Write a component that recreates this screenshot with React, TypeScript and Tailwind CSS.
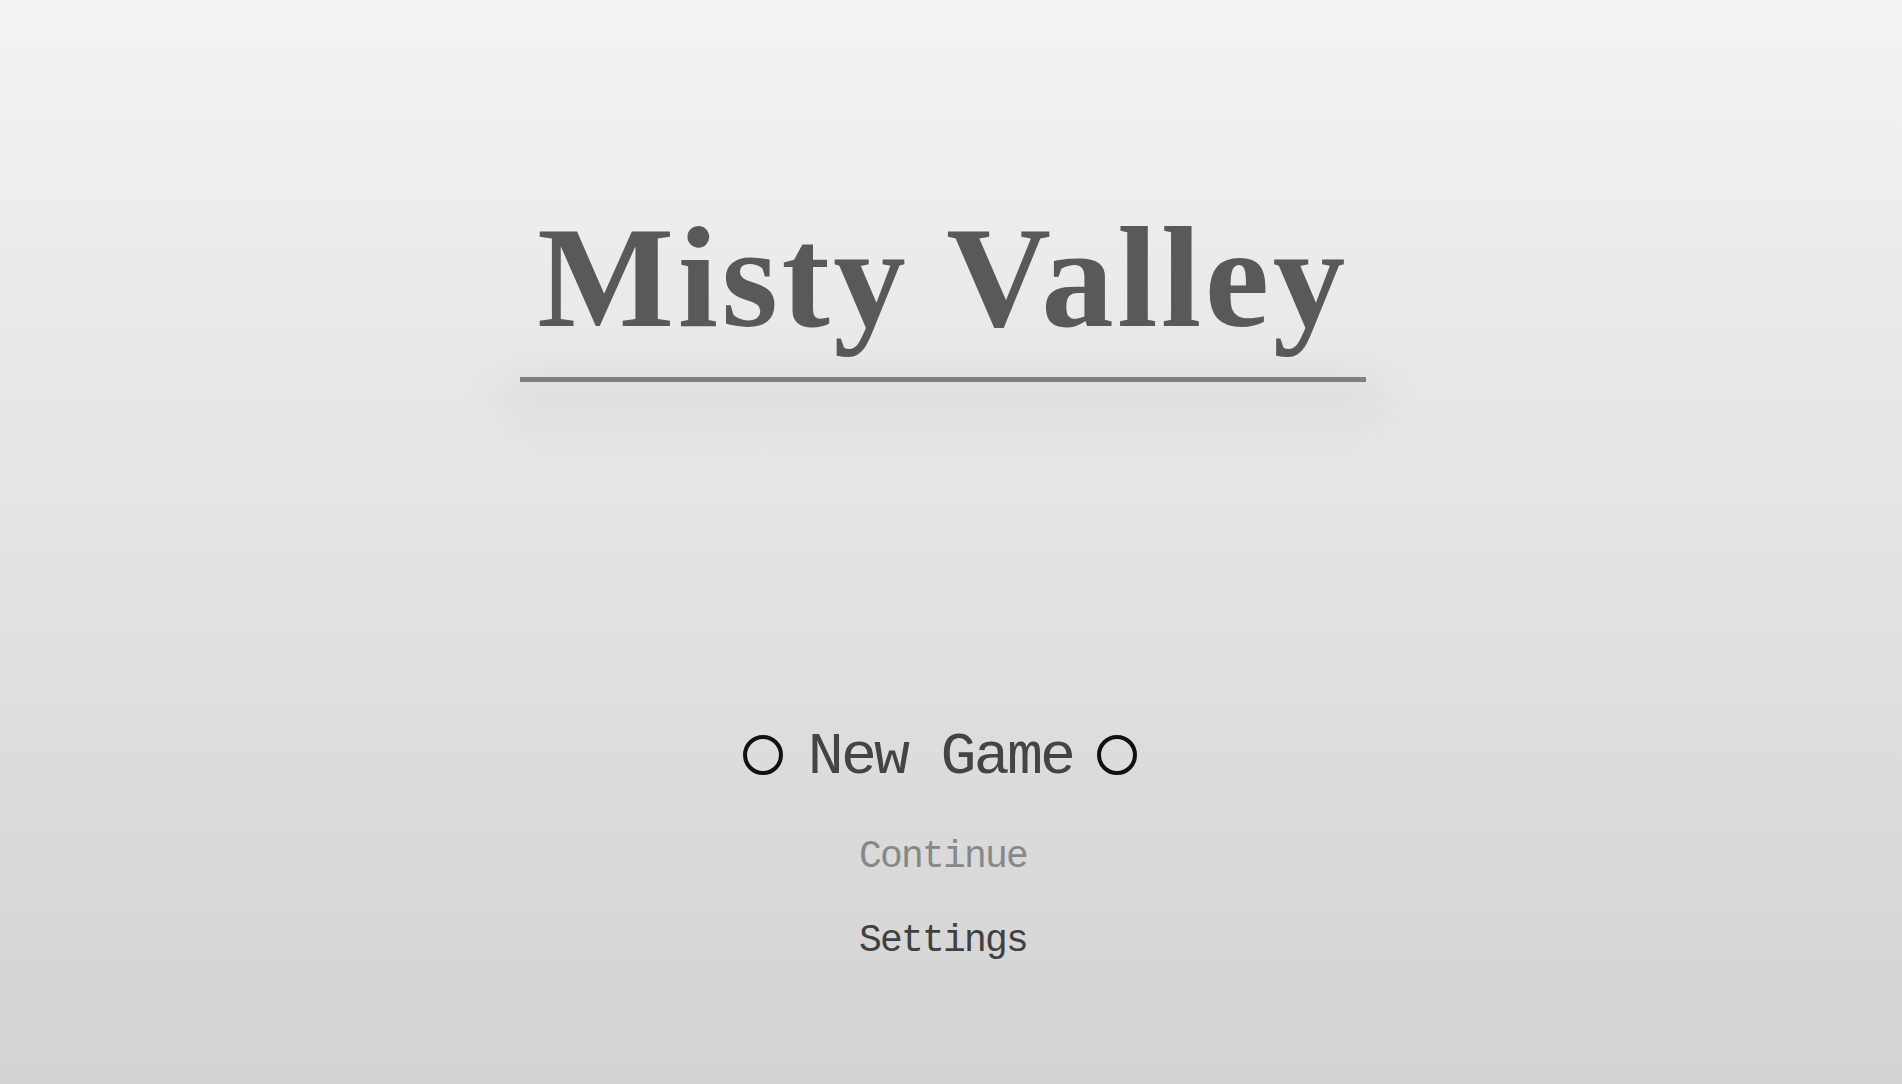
import React, { useState } from 'react';

const menuItems = [
  { id: 'new', label: 'New Game', disabled: false },
  { id: 'continue', label: 'Continue', disabled: true },
  { id: 'settings', label: 'Settings', disabled: false },
];

function Ring() {
  return <div className="w-10 h-10 rounded-full border-[4px] border-[#111111] shrink-0 mb-[4px]" />;
}

export default function App() {
  const [selected] = useState('new');

  return (
    <div className="w-full h-screen overflow-hidden bg-gradient-to-b from-[#f3f3f3] to-[#d3d3d3] pr-4 flex flex-col items-center">
      <div className="mt-[205px] flex flex-col items-center">
        <h1
          className="text-[145px] leading-none font-bold tracking-[3.5px] text-[#595959] whitespace-nowrap"
          style={{ fontFamily: '"Liberation Serif", "Times New Roman", serif' }}
        >
          Misty Valley
        </h1>
        <div className="mt-[27px] w-[846px] h-[5px] bg-[#808080] shadow-[0_18px_50px_22px_rgba(0,0,0,0.045)]" />
      </div>

      <nav
        className="mt-[345px] flex flex-col items-center"
        style={{ fontFamily: '"Liberation Mono", "Courier New", monospace' }}
      >
        {menuItems.map((item) => {
          const isSelected = item.id === selected;
          if (isSelected) {
            return (
              <div key={item.id} className="flex items-center h-[60px] mr-[6px]">
                <Ring />
                <span className="ml-[25px] mr-[24px] text-[60px] leading-none tracking-[-2.8px] text-[#444444] whitespace-nowrap">
                  {item.label}
                </span>
                <Ring />
              </div>
            );
          }
          return (
            <div
              key={item.id}
              className={`text-[38px] leading-none tracking-[-1.8px] whitespace-nowrap ${
                item.id === 'continue' ? 'mt-[51px] text-[#888888]' : 'mt-[46px] text-[#404040]'
              }`}
            >
              {item.label}
            </div>
          );
        })}
      </nav>
    </div>
  );
}
